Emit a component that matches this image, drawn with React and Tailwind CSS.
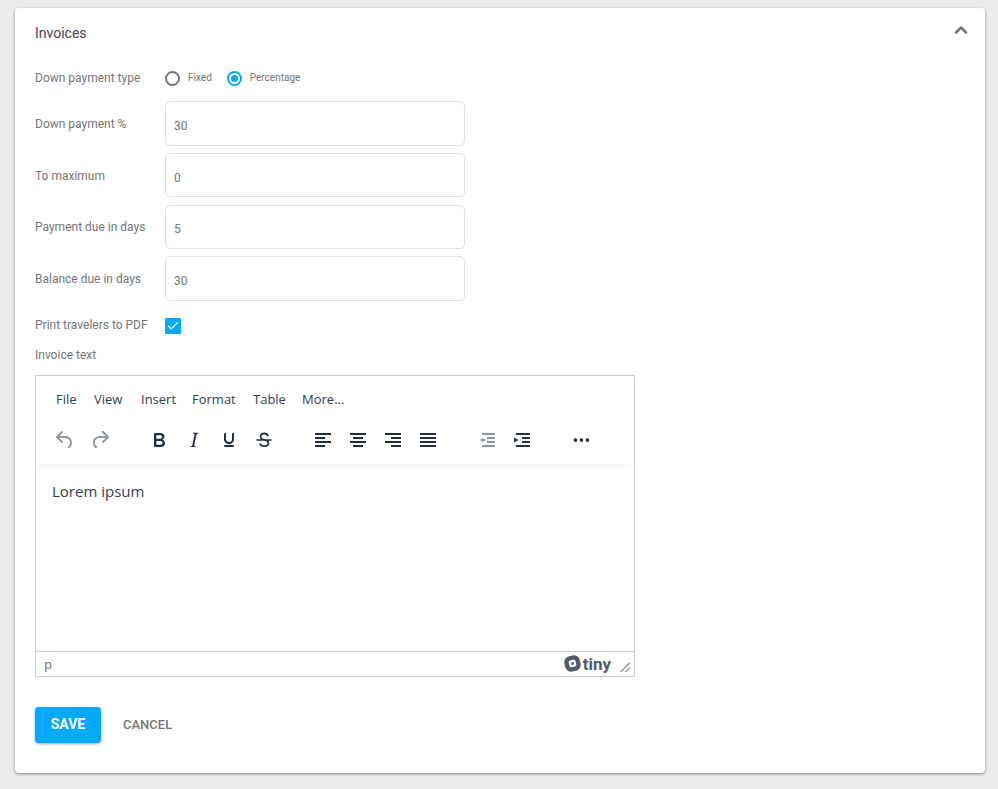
import React from "react"
import { Check, ChevronUp } from "lucide-react"

const fields = [
    { label: "Down payment %", value: "30" },
    { label: "To maximum", value: "0" },
    { label: "Payment due in days", value: "5" },
    { label: "Balance due in days", value: "30" },
]

const menus = [
    { label: "File", width: "w-[21px]" },
    { label: "View", width: "w-[30px]" },
    { label: "Insert", width: "w-[34px]" },
    { label: "Format", width: "w-[44px]" },
    { label: "Table", width: "w-[32px]" },
    { label: "More...", width: "w-[42px]" },
]

const icons = {
    undo: "M6.4 8H12c3.7 0 6.2 2 6.8 5.1.6 2.7-.4 5.6-2.3 6.8a1 1 0 0 1-1-1.8c1.1-.6 1.8-2.7 1.4-4.6-.5-2.1-2.1-3.5-4.9-3.5H6.4l3.3 3.3a1 1 0 1 1-1.4 1.4l-5-5a1 1 0 0 1 0-1.4l5-5a1 1 0 0 1 1.4 1.4L6.4 8z",
    redo: "M17.6 10H12c-2.8 0-4.4 1.4-4.9 3.5-.4 2 .3 4 1.4 4.6a1 1 0 1 1-1 1.8c-2-1.2-2.9-4.1-2.3-6.8.6-3 3-5.1 6.8-5.1h5.6l-3.3-3.3a1 1 0 1 1 1.4-1.4l5 5a1 1 0 0 1 0 1.4l-5 5a1 1 0 0 1-1.4-1.4l3.3-3.3z",
    bold: "M7.8 19c-.3 0-.5 0-.6-.2l-.2-.5V5.7c0-.2 0-.4.2-.5l.6-.2h5c1.5 0 2.7.3 3.5 1 .7.6 1.1 1.4 1.1 2.5a3 3 0 0 1-.6 1.9c-.4.6-1 1-1.6 1.2.4.1.9.3 1.3.6s.8.7 1 1.2c.4.4.5 1 .5 1.6 0 1.3-.4 2.3-1.3 3-.8.7-2.1 1-3.8 1H7.8zm5-8.3c.6 0 1.2-.1 1.6-.5.4-.3.6-.7.6-1.3 0-1.1-.8-1.7-2.3-1.7H9.3v3.5h3.4zm.5 6c.7 0 1.3-.1 1.7-.4.4-.4.6-.9.6-1.5s-.2-1-.7-1.4c-.4-.3-1-.4-2-.4H9.4v3.8h4z",
    italic: "M16.7 4.7l-.1.9h-.3c-.6 0-1 0-1.4.3-.3.3-.4.6-.5 1.1l-2.1 9.8v.6c0 .5.4.8 1.4.8h.2l-.2.8H8l.2-.8h.2c1.1 0 1.8-.5 2-1.5l2-9.8.1-.5c0-.6-.4-.8-1.4-.8h-.3l.2-.9h5.8z",
    underline: "M16 5c.6 0 1 .4 1 1v5.5a4 4 0 0 1-.4 1.8l-1 1.4a5.3 5.3 0 0 1-5.5 1 5 5 0 0 1-1.6-1c-.5-.4-.8-.9-1.1-1.4a4 4 0 0 1-.4-1.8V6c0-.6.4-1 1-1s1 .4 1 1v5.5c0 .3 0 .6.2 1l.6.7a3.3 3.3 0 0 0 2.2.8 3.4 3.4 0 0 0 2.2-.8c.3-.2.4-.5.6-.8l.2-.9V6c0-.6.4-1 1-1zM8 17h8c.6 0 1 .4 1 1s-.4 1-1 1H8a1 1 0 0 1 0-2z",
    strike: "M15.6 8.500c-.5-.7-1-1.100-1.300-1.300-.6-.4-1.300-.6-2-.6-2.700 0-2.800 1.700-2.800 2.100 0 1.600 1.800 2 3.200 2.300 4.400.9 4.600 2.800 4.600 3.900 0 1.400-.7 4.100-5 4.100A6.200 6.200 0 0 1 7 16.400l1.500-1.100c.4.6 1.600 2 3.700 2 1.600 0 2.500-.4 3-1 .3-.4.4-.8.4-1.100 0-.8-.3-2-3.200-2.500-1.400-.3-4.600-1-4.600-4.200 0-2.500 1.800-4 4.600-4 1.300 0 2.300.3 3 .9.600.4 1.200 1 1.700 1.700zM5 11.200h14a.8.8 0 0 1 0 1.600H5a.8.8 0 0 1 0-1.600z",
    alignLeft: "M4 5h16v2H4zM4 9h10v2H4zM4 13h16v2H4zM4 17h10v2H4z",
    alignCenter: "M4 5h16v2H4zM7 9h10v2H7zM4 13h16v2H4zM7 17h10v2H7z",
    alignRight: "M4 5h16v2H4zM10 9h10v2H10zM4 13h16v2H4zM10 17h10v2H10z",
    justify: "M4 5h16v2H4zM4 9h16v2H4zM4 13h16v2H4zM4 17h16v2H4z",
    outdent: "M7 5h13v2H7zM12 9h8v2h-8zM12 13h8v2h-8zM7 17h13v2H7zM10 12.800h-1.500v1.700l-3.500-2.500 3.500-2.500v1.700h1.500z",
    indent: "M6 5h14v2H6zM12 9h8v2h-8zM12 13h8v2h-8zM6 17h14v2H6zM4 9.500l4.500 2.500-4.500 2.500z",
    more: "M6 10.300a1.800 1.800 0 1 1 0 3.500 1.800 1.800 0 0 1 0-3.500zm6 0a1.800 1.800 0 1 1 0 3.500 1.800 1.800 0 0 1 0-3.500zm6 0a1.800 1.800 0 1 1 0 3.500 1.800 1.800 0 0 1 0-3.500z",
}

const toolbar = [
    [["undo", true], ["redo", true]],
    [["bold"], ["italic"], ["underline"], ["strike"]],
    [["alignLeft"], ["alignCenter"], ["alignRight"], ["justify"]],
    [["outdent", true], ["indent"]],
    [["more"]],
]

function ToolIcon({ name, disabled }) {
    return (
        <div className="flex w-[35px] justify-center">
            <svg width="24" height="24" viewBox="0 0 24 24" className={disabled ? "fill-[#222f3e] opacity-50" : "fill-[#222f3e]"}>
                <path d={icons[name]} />
            </svg>
        </div>
    )
}

function Radio({ label, checked }) {
    return (
        <div className="flex items-center gap-[8px]">
            <div className={`mt-px flex h-[15px] w-[15px] items-center justify-center rounded-full border-2 ${checked ? "border-[#03a9f4]" : "border-[#757575]"}`}>
                {checked && <div className="h-[7px] w-[7px] rounded-full bg-[#03a9f4]" />}
            </div>
            <span className="-mt-px text-[10px] text-[#757575]">{label}</span>
        </div>
    )
}

function TinyLogo() {
    return (
        <svg width="17" height="17" viewBox="0 0 17 17">
            <rect x="2.800" y="2.800" width="11.400" height="11.400" rx="4" transform="rotate(-12 8.500 8.500)" fill="none" stroke="#515b66" strokeWidth="4.400" />
            <rect x="7.200" y="7.200" width="2.600" height="2.600" fill="#515b66" />
        </svg>
    )
}

export default function App() {
    return (
        <div className="h-[789px] w-[998px] overflow-hidden bg-[#ebebeb] pl-[15px] pt-[8px] font-['Roboto',sans-serif]">
            <div className="h-[765px] w-[970px] rounded-[4px] bg-white px-[20px] pt-[17px] shadow-[0_1px_3px_rgba(0,0,0,0.45)]">
                <div className="flex h-[16px] items-center justify-between">
                    <h2 className="text-[14px] font-normal text-[#3f4750]">Invoices</h2>
                    <ChevronUp size={20} strokeWidth={3} className="mr-[-6px] mt-[-6px] text-[#757575]" />
                </div>

                <div className="mt-[29px] flex h-[16px] items-center">
                    <span className="w-[130px] text-[12px] text-[#757575]">Down payment type</span>
                    <div className="flex gap-[15px]">
                        <Radio label="Fixed" />
                        <Radio label="Percentage" checked />
                    </div>
                </div>

                <div className="mt-[15.3px] flex flex-col gap-[7.17px]">
                    {fields.map((f) => (
                        <div key={f.label} className="flex h-[44.5px]">
                            <label className="mt-[15.6px] w-[130px] text-[12px] leading-[14px] text-[#757575]">{f.label}</label>
                            <input
                                readOnly
                                value={f.value}
                                className="h-full w-[300px] rounded-[5px] border border-[#dfdfdf] pl-[8px] pt-[5px] text-[12px] text-[#757575] outline-none"
                            />
                        </div>
                    ))}
                </div>

                <div className="mt-[17.2px] flex h-[16px] items-center">
                    <span className="-mt-[2px] w-[130px] text-[12px] text-[#757575]">Print travelers to PDF</span>
                    <div className="flex h-[16px] w-[16px] items-center justify-center rounded-[1px] bg-[#03a9f4]">
                        <Check size={14} strokeWidth={2} className="text-white" />
                    </div>
                </div>

                <div className="mt-[14px] text-[12px] leading-[14px] text-[#757575]">Invoice text</div>

                <div className="mt-[13px] flex h-[302px] w-[600px] flex-col border border-[#cccccc] font-['Open_Sans',sans-serif]">
                    <div className="h-[88px] shrink-0 shadow-[0_3px_5px_-2px_rgba(34,47,62,0.08)]">
                        <div className="flex gap-[17px] pl-[20px] pt-[14px] text-[13px] leading-[18px] text-[#33404e]">
                            {menus.map((m) => (
                                <span key={m.label} className={`${m.width} whitespace-nowrap`}>{m.label}</span>
                            ))}
                        </div>
                        <div className="mt-[20px] flex gap-[24px] pl-[11.5px]">
                            {toolbar.map((group, i) => (
                                <div key={i} className="flex">
                                    {group.map(([name, disabled]) => (
                                        <ToolIcon key={name} name={name} disabled={disabled} />
                                    ))}
                                </div>
                            ))}
                        </div>
                    </div>
                    <div className="flex-1 px-[16px] pt-[17px] text-[15px] leading-[20px] text-[#33404e]">Lorem ipsum</div>
                    <div className="flex h-[25px] shrink-0 items-center justify-between border-t border-[#cccccc] pl-[8px] pr-[3px]">
                        <span className="mt-[2px] text-[13px] text-[#6b7480]">p</span>
                        <div className="flex items-center">
                            <TinyLogo />
                            <span className="ml-[2px] font-['Roboto',sans-serif] text-[17px] font-bold leading-[18px] text-[#515b66]">tiny</span>
                            <svg width="12" height="12" viewBox="0 0 12 12" className="ml-[8px] mt-[6px] stroke-[#858c94]">
                                <path d="M1.500 11 11 1.500M6.500 11 11 6.500" fill="none" strokeWidth="1.100" />
                            </svg>
                        </div>
                    </div>
                </div>

                <div className="mt-[30px] flex items-center">
                    <button className="h-[36px] w-[66px] rounded-[4px] bg-[#03a9fc] text-[14px] font-bold text-white shadow-[0_1px_3px_rgba(0,0,0,0.35)]">SAVE</button>
                    <button className="ml-[22px] text-[13px] font-medium text-[#757575]">CANCEL</button>
                </div>
            </div>
        </div>
    )
}
